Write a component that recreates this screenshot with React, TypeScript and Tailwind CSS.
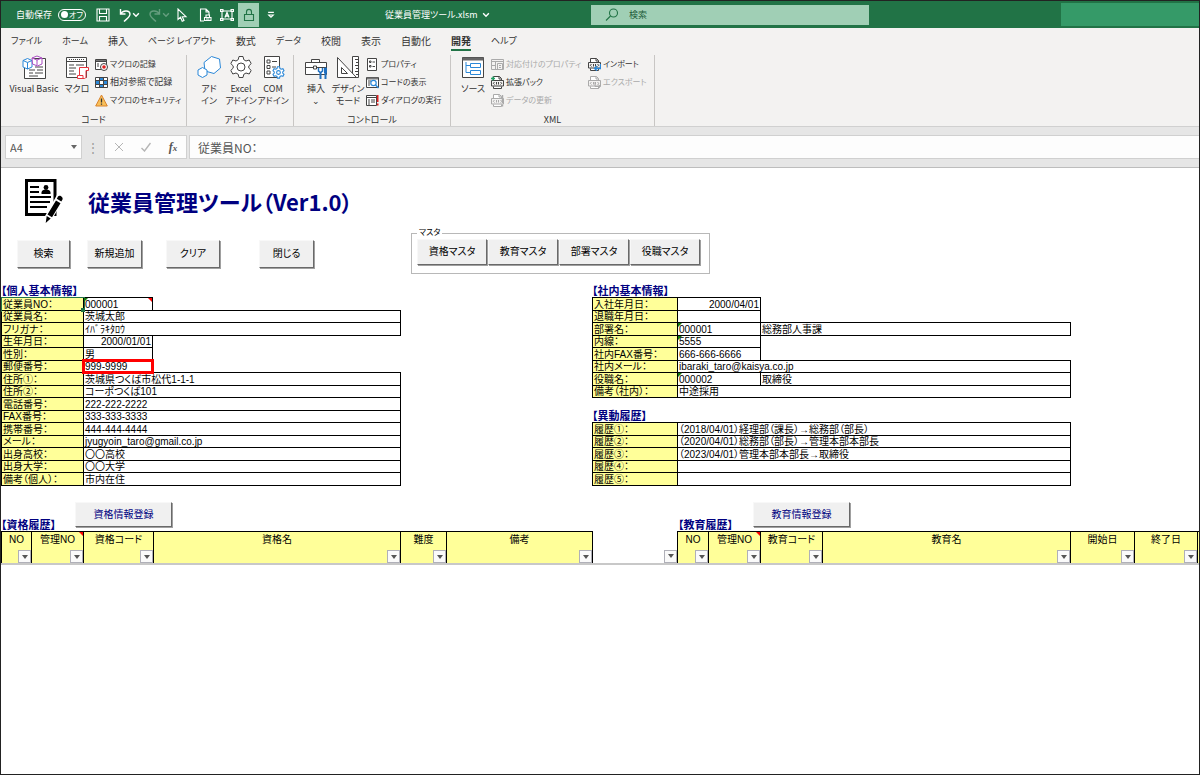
import React, { useState } from 'react'
import clsx from 'clsx'

interface Field {
  label: string
  value?: string
  name?: string
  wide?: boolean
  right?: boolean
  textCode?: boolean
  note?: boolean
  selected?: boolean
  marked?: boolean
}

interface FilterColumn {
  label?: string
  width: string
  note?: boolean
}

const TABS = [
  { name: 'ファイル', kana: true },
  { name: 'ホーム', kana: true },
  { name: '挿入' },
  { name: 'ページ レイアウト', kana: true },
  { name: '数式' },
  { name: 'データ', kana: true },
  { name: '校閲' },
  { name: '表示' },
  { name: '自動化' },
  { name: '開発' },
  { name: 'ヘルプ', kana: true }
]

const PERSONAL: Field[] = [
  { label: '従業員NO：', value: '000001', textCode: true, note: true, selected: true },
  { label: '従業員名：', value: '茨城太郎', wide: true },
  { label: 'フリガナ：', value: 'ｲﾊﾞﾗｷﾀﾛｳ', wide: true },
  { label: '生年月日：', value: '2000/01/01', right: true },
  { label: '性別：', value: '男' },
  { label: '郵便番号：', value: '999-9999', marked: true },
  { label: '住所①：', value: '茨城県つくば市松代1-1-1', wide: true },
  { label: '住所②：', value: 'コーポつくば101', wide: true },
  { label: '電話番号：', value: '222-222-2222', wide: true },
  { label: 'FAX番号：', value: '333-333-3333', wide: true },
  { label: '携帯番号：', value: '444-444-4444', wide: true },
  { label: 'メール：', value: 'jyugyoin_taro@gmail.co.jp', wide: true },
  { label: '出身高校：', value: '〇〇高校', wide: true },
  { label: '出身大学：', value: '〇〇大学', wide: true },
  { label: '備考（個人）：', value: '市内在住', wide: true }
]

const COMPANY: Field[] = [
  { label: '入社年月日：', value: '2000/04/01', right: true },
  { label: '退職年月日：' },
  { label: '部署名：', value: '000001', name: '総務部人事課', textCode: true },
  { label: '内線：', value: '5555', textCode: true },
  { label: '社内FAX番号：', value: '666-666-6666' },
  { label: '社内メール：', value: 'ibaraki_taro@kaisya.co.jp', wide: true },
  { label: '役職名：', value: '000002', name: '取締役', textCode: true },
  { label: '備考（社内）：', value: '中途採用', wide: true }
]

const TRANSFERS: Field[] = [
  { label: '履歴①：', value: '（2018/04/01）経理部（課長）→総務部（部長）', wide: true },
  { label: '履歴②：', value: '（2020/04/01）総務部（部長）→管理本部本部長', wide: true },
  { label: '履歴③：', value: '（2023/04/01）管理本部本部長→取締役', wide: true },
  { label: '履歴④：', wide: true },
  { label: '履歴⑤：', wide: true }
]

const FILTER_COLUMNS: FilterColumn[] = [
  { label: 'NO', width: 'w-[30px]' },
  { label: '管理NO', width: 'w-[52px]', note: true },
  { label: '資格コード', width: 'w-[70px]' },
  { label: '資格名', width: 'w-[247px]' },
  { label: '難度', width: 'w-[46px]' },
  { label: '備考', width: 'w-[146px]' },
  { width: 'w-[85px]' },
  { label: 'NO', width: 'w-[31px]' },
  { label: '管理NO', width: 'w-[52px]', note: true },
  { label: '教育コード', width: 'w-[62px]' },
  { label: '教育名', width: 'w-[248px]' },
  { label: '開始日', width: 'w-[64px]' },
  { label: '終了日', width: 'w-[63px]' }
]

/* ---------- Icons ---------- */

type IconProps = { children: React.ReactNode; className?: string; box?: string }

const Svg = ({ children, className = 'size-6', box = '0 0 24 24' }: IconProps) => (
  <svg viewBox={box} className={clsx('shrink-0', className)} fill="none" stroke="#444" strokeWidth="1" aria-hidden="true">
    {children}
  </svg>
)

const Small = ({ children }: { children: React.ReactNode }) => (
  <Svg className="size-[13px]" box="0 0 13 13">{children}</Svg>
)

const GEAR = 'M10 1.5h4l.8 3.2L17 6l3.200-1 2 3.600-2.400 2.300v2.200l2.400 2.300-2 3.600-3.200-1-2.200 1.300-.8 3.200h-4l-.8-3.200L7 18l-3.200 1-2-3.600 2.400-2.300v-2.200L1.800 8.600l2-3.600L7 6l2.200-1.300z'

const VisualBasicIcon = () => (
  <Svg>
    <path d="M2.5 13v10.5h21v-20H12" fill="#fff" />
    <path d="M13 12h8M7 15h6M15 15h6M7 18h4M13 18h8M7 21h9" />
    <path d="M1 5.5l4.5-2 4.5 2V12l-4.5 2L1 12zM1 5.5l4.5 2 4.5-2M5.5 7.5V14" fill="#fff" stroke="#2b88d8" />
    <path d="M10 3l5-2 5 2v6l-4.5 2-5-2zM10 3l5 2 5-2M15 5v5.5" fill="#fff" stroke="#a84bc0" />
  </Svg>
)

const MacroIcon = () => (
  <Svg>
    <path d="M1.5 2.5h20v20h-20zM1.5 6.5h20" fill="#fff" />
    <path d="M4 4.5h15" strokeDasharray="1 1" />
    <path d="M4 10h5M11 10h8M4 13h7M4 16h5M4 19h7" />
    <path d="M14.5 12.5h9v3H21V22c0 1-1 1.5-2 1.5h-6.5v-3h2z" fill="#fff" stroke="#e8323c" />
    <path d="M14.5 20.5H18v3" stroke="#e8323c" />
  </Svg>
)

const HexIcon = () => (
  <Svg>
    <path d="M14.5 1.5l8 2.5 1 9-6.5 5.5-9-2.5-1-8.5z" fill="#fff" stroke="#2b88d8" />
    <path d="M5.5 12.5L10 15v5l-4.5 2.5L1 20v-5z" fill="#fff" stroke="#2b88d8" />
  </Svg>
)

const GearIcon = () => (
  <Svg>
    <path d={GEAR} fill="#fff" />
    <circle cx="12" cy="12" r="4" />
  </Svg>
)

const ComIcon = () => (
  <Svg>
    <path d="M3.5 1.5h15v21h-15z" fill="#fff" />
    <path d="M6 5h3v3H6zM6 10.5h3v3H6zM6 16h3v3H6zM11 6.5h5M11 12h4" />
    <g transform="translate(11 11) scale(.54)">
      <path d={GEAR} fill="#fff" stroke="#2b88d8" strokeWidth="2" />
      <circle cx="12" cy="12" r="3.5" stroke="#2b88d8" strokeWidth="2" />
    </g>
  </Svg>
)

const ToolboxIcon = () => (
  <Svg>
    <path d="M1.5 7.5h21v12h-21zM7.5 7V4.5h8V7M1.5 12.5h8M13 12.5h9M9.5 11h3v3h-3z" fill="#fff" />
    <path d="M16.5 17v7M21.5 18v6" stroke="#1e6fc0" strokeWidth="2" />
    <path d="M14.5 13v3l2 1.5 2-1.5v-3" stroke="#1e6fc0" strokeWidth="1.500" />
    <path d="M20.500 13h2v5h-2z" fill="#1e6fc0" stroke="#1e6fc0" />
  </Svg>
)

const DesignIcon = () => (
  <Svg>
    <path d="M16.5 1.5h6v21h-6zM19 4.5h3M20 7.5h2M19 10.5h3M20 13.5h2M19 16.5h3M20 19.5h2" fill="#fff" />
    <path d="M1.5 2.5l19 20h-19zM5.5 12.5l6 6h-6z" fill="#fff" />
  </Svg>
)

const SourceIcon = () => (
  <Svg>
    <path d="M1.5 2.5h21v20h-21z" fill="#fff" />
    <path d="M1.5 4h21" strokeWidth="3" stroke="#666" />
    <path d="M9.5 8.5h10v4h-10zM9.5 15.5h10v4h-10zM5 7v10.5h4M5 10.5h4" stroke="#2b88d8" />
  </Svg>
)

const RecordIcon = () => (
  <Small>
    <path d="M.5 1.5h11v10H.5zM.5 3.5h11M2 6h2M2 8h2" fill="#fff" />
    <path d="M1 2.5h10" stroke="#777" />
    <circle cx="9" cy="9" r="3.5" fill="#fff" />
    <circle cx="9" cy="9" r="1.8" fill="#e02020" stroke="none" />
  </Small>
)

const RelativeIcon = () => (
  <Small>
    <path d="M.5 1.5h12v10H.5z" fill="#fff" />
    <path d="M1 5h3.5v3H1zM8.5 5H12v3H8.5zM5 2h3v3H5zM5 8h3v3H5z" fill="#2b88d8" stroke="none" />
    <path d="M.5 4.5h12M.5 8.5h12M4.5 1.5v10M8.5 1.5v10" />
  </Small>
)

const WarningIcon = () => (
  <Small>
    <path d="M6.5 1l5.8 11H.7z" fill="#f8c05a" stroke="#d9822b" />
    <path d="M6.5 4.5v4M6.5 9.5v1.2" stroke="#333" strokeWidth="1.3" />
  </Small>
)

const PropertyIcon = () => (
  <Small>
    <path d="M1.5.5h9v12h-9z" fill="#fff" />
    <path d="M3.5 3H5v1.5H3.5zM3.5 7.5H5V9H3.5zM6.5 4H9M6.5 8.5H9" />
  </Small>
)

const ViewCodeIcon = () => (
  <Small>
    <path d="M.5 1.5h12v10H.5zM2 5h3M2 7h2M2 9h2" fill="#fff" />
    <path d="M1 2.5h11" stroke="#777" strokeWidth="2" />
    <circle cx="7.5" cy="7" r="2.7" fill="#fff" stroke="#2b88d8" strokeWidth="1.2" />
    <path d="M9.5 9l3 3" stroke="#2b88d8" strokeWidth="1.4" />
  </Small>
)

const RunDialogIcon = () => (
  <Small>
    <path d="M.5 1.5h10v10H.5zM.5 3.5h10M2 6h2M5 6h4M2 8h2M5 8h4M2 10h2" fill="#fff" />
    <path d="M11.7 1v7M11.7 9.5v2" stroke="#e02020" strokeWidth="1.6" />
  </Small>
)

const MapIcon = () => (
  <Small>
    <path d="M.5 1.5h12v10H.5zM.5 3.5h12M4.5 3.5v8M.5 7.5h4" stroke="#aaa" />
    <path d="M6.5 5.5h5v6h-5zM8 7.5h2M8 9.5h2" stroke="#aaa" />
  </Small>
)

const FileCodeIcon = ({ color = '#444', accent }: { color?: string; accent?: 'plus' | 'in' | 'out' | 'bang' }) => (
  <Small>
    <path d="M2.5 4.5v-4h6l2 2v2M2.5 10.5v2h8v-2M8 .5V3h2.5" fill="#fff" stroke={color} />
    <path d="M.5 4.5h12V10H.5z" fill="#f3f2f1" stroke={color} />
    <path d="M3.5 6L2.3 7.3l1.2 1.2M5.5 6v2.5M7.5 6v2.5M9.5 6l1.2 1.3-1.2 1.2" stroke={color} />
    {accent === 'plus' && <path d="M0 2.5h4M2 .5v4" stroke="#21a366" strokeWidth="1.3" />}
    {accent === 'in' && <path d="M12.5 6v4.5H7M9 8l-2.5 2.5L9 12.7" stroke="#2b88d8" strokeWidth="1.3" />}
    {accent === 'out' && <path d="M7 6v4.5h5M10.2 8.5l2.3 2-2.3 2" stroke={color} />}
    {accent === 'bang' && <path d="M11.5 1v8M11.5 10.5v2" stroke={color} strokeWidth="1.4" />}
  </Small>
)

const TitleIcon = ({ children, className = 'size-3.5' }: { children: React.ReactNode; className?: string }) => (
  <svg viewBox="0 0 14 14" className={clsx('shrink-0', className)} fill="none" stroke="#fff" strokeWidth="1.1" aria-hidden="true">
    {children}
  </svg>
)

const NotePencilIcon = () => (
  <svg viewBox="0 0 40 46" className="h-[46px] w-10 shrink-0" aria-hidden="true">
    <path d="M2.5 2.5h28.5v34H2.5z" fill="#fff" stroke="#000" strokeWidth="3" />
    <path d="M6 9h9M6 14h9M6 19h21M6 24h20M6 29h17" stroke="#000" strokeWidth="2" />
    <circle cx="22" cy="9.5" r="2.4" />
    <path d="M17.5 16v-1.5c0-2 2-3 4.5-3s4.5 1 4.5 3V16z" />
    <path d="M33.5 16l7 4-14 24-6 3V39z" fill="#fff" />
    <path d="M34 18.5c1.5-2 5.5.5 4.5 3l-1.2 2-4.500-2.700zM32 22.500l4.500 2.700-8.500 14-4.500-2.700zM22.700 38l4 2.500-5 4.500z" />
  </svg>
)

/* ---------- Ribbon ---------- */

const BigButton = ({ icon, lines, width = 'w-8' }: { icon: React.ReactNode; lines: string[]; width?: string }) => (
  <button type="button" className={clsx('flex shrink-0 flex-col items-center', width)}>
    {icon}
    <span className="mt-1 whitespace-nowrap text-center">
      {lines.map(line => <span key={line} className="block">{line}</span>)}
    </span>
  </button>
)

interface SmallButtonProps {
  icon: React.ReactNode
  label: string
  disabled?: boolean
  kanji?: boolean
}

const SmallButton = ({ icon, label, disabled, kanji }: SmallButtonProps) => (
  <button
    type="button"
    disabled={disabled}
    className={clsx(
      'flex h-[18px] items-center gap-0.5 whitespace-nowrap',
      kanji ? 'text-[9px]' : 'text-[8px]',
      disabled && 'text-[#aaa]'
    )}
  >
    {icon}
    {label}
  </button>
)

const RibbonGroup = ({ title, width, children }: { title: string; width: string; children: React.ReactNode }) => (
  <section className={clsx('flex shrink-0 flex-col justify-between border-r border-[#c8c6c4]', width)}>
    <div className="flex items-start">{children}</div>
    <h2 className="text-center">{title}</h2>
  </section>
)

const Ribbon = () => (
  <div className="flex h-[72px] border-b border-[#d0d0d0] text-[9px] leading-3">
    <RibbonGroup title="コード" width="w-[186px]">
      <BigButton icon={<VisualBasicIcon />} lines={['Visual Basic']} width="ml-1 w-[58px]" />
      <BigButton icon={<MacroIcon />} lines={['マクロ']} width="w-7" />
      <div className="ml-1">
        <SmallButton icon={<RecordIcon />} label="マクロの記録" />
        <SmallButton icon={<RelativeIcon />} label="相対参照で記録" kanji />
        <SmallButton icon={<WarningIcon />} label="マクロのセキュリティ" />
      </div>
    </RibbonGroup>
    <RibbonGroup title="アドイン" width="w-[107px]">
      <BigButton icon={<HexIcon />} lines={['アド', 'イン']} width="ml-1.5 w-8" />
      <BigButton icon={<GearIcon />} lines={['Excel', 'アドイン']} />
      <BigButton icon={<ComIcon />} lines={['COM', 'アドイン']} />
    </RibbonGroup>
    <RibbonGroup title="コントロール" width="w-[157px]">
      <BigButton icon={<ToolboxIcon />} lines={['挿入', '⌄']} width="ml-1.5 w-8" />
      <BigButton icon={<DesignIcon />} lines={['デザイン', 'モード']} />
      <div className="ml-0.5">
        <SmallButton icon={<PropertyIcon />} label="プロパティ" />
        <SmallButton icon={<ViewCodeIcon />} label="コードの表示" />
        <SmallButton icon={<RunDialogIcon />} label="ダイアログの実行" />
      </div>
    </RibbonGroup>
    <RibbonGroup title="XML" width="w-[204px]">
      <BigButton icon={<SourceIcon />} lines={['ソース']} width="ml-1.5 w-8" />
      <div className="ml-0.5 w-[97px]">
        <SmallButton icon={<MapIcon />} label="対応付けのプロパティ" disabled />
        <SmallButton icon={<FileCodeIcon accent="plus" />} label="拡張パック" />
        <SmallButton icon={<FileCodeIcon color="#aaa" accent="bang" />} label="データの更新" disabled />
      </div>
      <div>
        <SmallButton icon={<FileCodeIcon accent="in" />} label="インポート" />
        <SmallButton icon={<FileCodeIcon color="#aaa" accent="out" />} label="エクスポート" disabled />
      </div>
    </RibbonGroup>
  </div>
)

const TitleBar = () => {
  const [autoSave, setAutoSave] = useState(false)

  return (
    <header className="flex h-[27px] items-center bg-[#217346] text-[10px] leading-3 text-white">
      <div className="flex w-[384px] shrink-0 items-center pl-[15px]">
        <label htmlFor="autosave" className="w-[42px] whitespace-nowrap text-[9px]">自動保存</label>
        <button
          id="autosave"
          type="button"
          role="switch"
          aria-checked={autoSave}
          onClick={() => setAutoSave(!autoSave)}
          className="flex h-3 w-7 items-center justify-between rounded-full border border-white px-0.5 text-[8px] leading-none"
        >
          <span className="size-[7px] rounded-full bg-white" />
          {autoSave ? 'オン' : 'オフ'}
        </button>
        <button type="button" aria-label="上書き保存" className="ml-2.5">
          <TitleIcon><path d="M1 1h12v12H1zM3.5 1v4.5h7V1M3.5 13V8.5h7V13" /></TitleIcon>
        </button>
        <button type="button" aria-label="元に戻す" className="ml-2 flex items-center">
          <TitleIcon><path d="M2.5 1v5h5M2.5 6c2-3.5 9-4.5 9.5 0 0 3-3 4.5-6 7.5" strokeWidth="1.4" /></TitleIcon>
          <TitleIcon className="size-2"><path d="M2 4l5 5 5-5" strokeWidth="2.5" /></TitleIcon>
        </button>
        <button type="button" aria-label="やり直し" disabled className="ml-2 flex items-center opacity-30">
          <TitleIcon><path d="M11.5 1v5h-5M11.5 6c-2-3.5-9-4.5-9.5 0 0 3 3 4.5 6 7.5" strokeWidth="1.4" /></TitleIcon>
          <TitleIcon className="size-2"><path d="M2 4l5 5 5-5" strokeWidth="2.5" /></TitleIcon>
        </button>
        <button type="button" aria-label="選択" className="ml-1">
          <TitleIcon><path d="M4 1v10.5l2.5-2.3 1.7 4 1.8-.8-1.7-3.7H12z" /></TitleIcon>
        </button>
        <button type="button" aria-label="印刷プレビュー" className="ml-2.5">
          <TitleIcon><path d="M6 13H2.5V1H8l3 3v3M8 1v3h3" /><path d="M6.5 9.5H13v3H6.5zM8 9.5V7h3.5v2.5M8 11h3.5" /></TitleIcon>
        </button>
        <button type="button" aria-label="テキスト ボックス" className="ml-2">
          <TitleIcon>
            <path d="M2 3h10v8H2zM.5 1.5H3v2H.5zM11 1.5h2.5v2H11zM.5 10.5H3v2H.5zM11 10.5h2.5v2H11z" />
            <path d="M5 9.5l2-5 2 5M5.7 8h2.6" strokeWidth="1.3" />
          </TitleIcon>
        </button>
        <button type="button" aria-label="セルのロック" className="ml-1 flex h-6 w-[21px] items-center justify-center bg-[#a0cfb5]">
          <TitleIcon><path d="M2.5 6.5h9v6h-9zM4.5 6.5V4c0-3.5 5-3.5 5 0v2.5" stroke="#217346" /></TitleIcon>
        </button>
        <button type="button" aria-label="クイック アクセス ツール バーのユーザー設定" className="ml-2">
          <TitleIcon className="size-2"><path d="M2 2.5h10M3 7l4 4 4-4z" strokeWidth="2" /></TitleIcon>
        </button>
      </div>
      <h1 className="flex w-[206px] shrink-0 items-center gap-1 whitespace-nowrap text-[9px]">
        従業員管理ツール.xlsm
        <TitleIcon className="size-2"><path d="M2 4l5 5 5-5" strokeWidth="2.5" /></TitleIcon>
      </h1>
      <label className="flex h-5 w-[278px] shrink-0 items-center gap-2.5 bg-[#a0cfb5] pl-3.5 text-[9px] text-[#1c5c39]">
        <TitleIcon><circle cx="8.5" cy="5" r="4" stroke="#217346" /><path d="M5.5 8L1 12.5" stroke="#217346" /></TitleIcon>
        <input type="text" aria-label="検索" placeholder="検索" className="min-w-0 flex-1 outline-none placeholder:text-[#1c5c39]" />
      </label>
      <div className="ml-auto h-[23px] w-[138px] bg-[#359a68]" />
    </header>
  )
}

const FormulaBar = () => (
  <div className="flex h-[41px] items-center border-b border-[#bdbdbd] bg-[#e6e6e6] pl-1 text-xs text-[#555]">
    <div className="flex h-6 w-[77px] shrink-0 items-center border border-[#d0d0d0] bg-[#fdfdfd] pl-1">
      <input type="text" aria-label="名前ボックス" defaultValue="A4" className="min-w-0 flex-1 text-[11px] outline-none" />
      <svg viewBox="0 0 6 4" className="mr-1 h-1 w-1.5" aria-hidden="true"><path d="M0 0h6L3 4z" fill="#666" /></svg>
    </div>
    <span className="w-[22px] text-center text-[#999]">⋮</span>
    <div className="flex h-6 w-[83px] shrink-0 items-center justify-around border border-[#d0d0d0] bg-[#fdfdfd]">
      <button type="button" aria-label="キャンセル">
        <Svg className="size-2.5" box="0 0 10 10"><path d="M1 1l8 8M9 1L1 9" stroke="#b5b5b5" /></Svg>
      </button>
      <button type="button" aria-label="入力">
        <Svg className="size-2.5" box="0 0 10 10"><path d="M.5 6l3 3 6-8" stroke="#b5b5b5" strokeWidth="1.4" /></Svg>
      </button>
      <button type="button" aria-label="関数の挿入" className="font-['Liberation_Serif',serif] text-xs font-bold italic">
        f<span className="text-[9px]">x</span>
      </button>
    </div>
    <input
      type="text"
      aria-label="数式バー"
      defaultValue="従業員NO："
      className="ml-0.5 h-6 min-w-0 flex-1 border border-r-0 border-[#d0d0d0] bg-[#fdfdfd] pl-2 outline-none"
    />
  </div>
)

/* ---------- Sheet ---------- */

const SheetButton = ({ children, className }: { children: React.ReactNode; className?: string }) => (
  <button
    type="button"
    className={clsx(
      'shrink-0 whitespace-nowrap border border-t-[#f8f8f8] border-l-[#f8f8f8] border-r-[#696969] border-b-[#696969] bg-[#f0f0f0] text-[10px] leading-none shadow-[1px_1px_0_#a0a0a0]',
      className
    )}
  >
    {children}
  </button>
)

const Corner = ({ side }: { side: 'left' | 'right' }) => (
  <svg
    viewBox="0 0 4 4"
    className={clsx('absolute top-0 size-1', side === 'left' ? 'left-0' : 'right-0')}
    aria-hidden="true"
  >
    <path d={side === 'left' ? 'M0 0h4L0 4z' : 'M0 0h4v4z'} fill={side === 'left' ? '#107c10' : '#f00'} />
  </svg>
)

const FieldTable = ({ title, fields, widths }: { title: string; fields: Field[]; widths: string[] }) => (
  <table className="w-0 table-fixed border-collapse text-[10px] leading-[11px] whitespace-nowrap">
    <caption className="h-3 text-left text-[11px] leading-3 font-bold text-[#000080]">{title}</caption>
    <colgroup>
      {widths.map((w, i) => <col key={i} className={w} />)}
    </colgroup>
    <tbody>
      {fields.map(field => (
        <tr key={field.label} className="h-3 odd:h-[13px]">
          <th
            scope="row"
            className={clsx(
              'relative border border-black bg-[#ffff99] p-0 pl-px text-left font-normal',
              field.selected && 'outline outline-[#217346]'
            )}
          >
            {field.label}
            {field.selected && <span className="absolute -right-0.5 -bottom-0.5 z-10 size-1 bg-[#217346]" />}
          </th>
          <td
            colSpan={field.wide ? 2 : 1}
            className={clsx('relative border border-black p-0 px-px', field.right && 'text-right')}
          >
            {field.value}
            {field.textCode && <Corner side="left" />}
            {field.note && <Corner side="right" />}
            {field.marked && <span className="absolute -inset-0.5 z-10 border-3 border-[#f00]" />}
          </td>
          {!field.wide && (
            <td className={clsx('p-0 px-px', field.name && 'border border-black')}>{field.name}</td>
          )}
        </tr>
      ))}
    </tbody>
  </table>
)

const FilterTable = () => (
  <table className="w-full table-fixed border-collapse border-b-2 border-[#c8c8c8] text-[10px] leading-3 whitespace-nowrap">
    <colgroup>
      {FILTER_COLUMNS.map((col, i) => <col key={i} className={col.width} />)}
      <col />
    </colgroup>
    <thead>
      <tr>
        {FILTER_COLUMNS.map((col, i) => (
          <th
            key={i}
            scope="col"
            className={clsx('relative p-0 font-normal', col.label && 'border-x border-t border-black bg-[#ffff99]')}
          >
            <div className="flex h-[31px] flex-col justify-between pt-0.5">
              <span className="block h-3">{col.label}</span>
              <button
                type="button"
                aria-label="フィルター"
                className="flex size-[13px] items-center justify-center self-end border border-[#b0b0b8] bg-[#fafafa]"
              >
                <svg viewBox="0 0 6 4" className="h-1 w-1.5" aria-hidden="true"><path d="M0 0h6L3 4z" fill="#555" /></svg>
              </button>
            </div>
            {col.note && <Corner side="right" />}
          </th>
        ))}
        <td className="border-t border-black bg-[#ffff99] p-0" />
      </tr>
    </thead>
  </table>
)

export default function App() {
  const [activeTab, setActiveTab] = useState('開発')

  return (
    <div className="flex min-h-screen flex-col overflow-hidden border border-[#222] bg-white font-['Noto_Sans_CJK_JP',sans-serif] text-black [font-feature-settings:'palt']">
      <TitleBar />

      <div className="bg-[#f3f2f1] text-[#333]">
        <nav className="flex h-[27px] items-center gap-5 pl-2.5 leading-4">
          {TABS.map(tab => (
            <button
              key={tab.name}
              type="button"
              onClick={() => setActiveTab(tab.name)}
              className={clsx(
                'border-b-2 whitespace-nowrap',
                tab.kana ? 'text-[9px]' : 'text-[10px]',
                tab.name === activeTab ? 'border-[#217346] font-bold' : 'border-transparent'
              )}
            >
              {tab.name}
            </button>
          ))}
        </nav>
        <Ribbon />
      </div>

      <FormulaBar />

      <main className="flex-1 font-['Liberation_Sans','Noto_Sans_CJK_JP',sans-serif]">
        <div className="flex items-center gap-6 pt-2.5 pl-[23px]">
          <NotePencilIcon />
          <h2 className="font-['Noto_Sans_CJK_JP',sans-serif] text-[22px] leading-8 font-bold text-[#000080]">従業員管理ツール（Ver1.0）</h2>
        </div>

        <div className="flex items-start pt-1 pl-4">
          <div className="flex w-[394px] shrink-0 pt-3">
            <SheetButton className="h-7 w-[53px]">検索</SheetButton>
            <SheetButton className="ml-[17px] h-7 w-[55px]">新規追加</SheetButton>
            <SheetButton className="ml-6 h-7 w-[54px]">クリア</SheetButton>
            <SheetButton className="ml-[39px] h-7 w-[55px]">閉じる</SheetButton>
          </div>
          <fieldset className="flex h-[46px] w-[299px] shrink-0 gap-px border border-[#b8b8b8] px-[5px] pt-px">
            <legend className="px-0.5 text-[8px] leading-[10px]">マスタ</legend>
            {['資格マスタ', '教育マスタ', '部署マスタ', '役職マスタ'].map(name => (
              <SheetButton key={name} className="h-[26px] w-[70px]">{name}</SheetButton>
            ))}
          </fieldset>
        </div>

        <div className="flex items-start pt-[11px]">
          <div className="w-[591px] shrink-0">
            <FieldTable title="【個人基本情報】" fields={PERSONAL} widths={['w-[82px]', 'w-[69px]', 'w-[248px]']} />
          </div>
          <div className="flex flex-col gap-3">
            <FieldTable title="【社内基本情報】" fields={COMPANY} widths={['w-[85px]', 'w-[83px]', 'w-[310px]']} />
            <FieldTable title="【異動履歴】" fields={TRANSFERS} widths={['w-[85px]', 'w-[83px]', 'w-[310px]']} />
          </div>
        </div>

        <div className="flex pt-4 text-[11px] leading-3 font-bold text-[#000080]">
          <div className="flex w-[677px] shrink-0 items-end">
            <h3 className="w-[74px]">【資格履歴】</h3>
            <SheetButton className="mb-1 h-[25px] w-[97px] font-normal">資格情報登録</SheetButton>
          </div>
          <div className="flex items-end">
            <h3 className="w-[75px]">【教育履歴】</h3>
            <SheetButton className="mb-1 h-[25px] w-[97px] font-normal">教育情報登録</SheetButton>
          </div>
        </div>
        <FilterTable />
      </main>
    </div>
  )
}
